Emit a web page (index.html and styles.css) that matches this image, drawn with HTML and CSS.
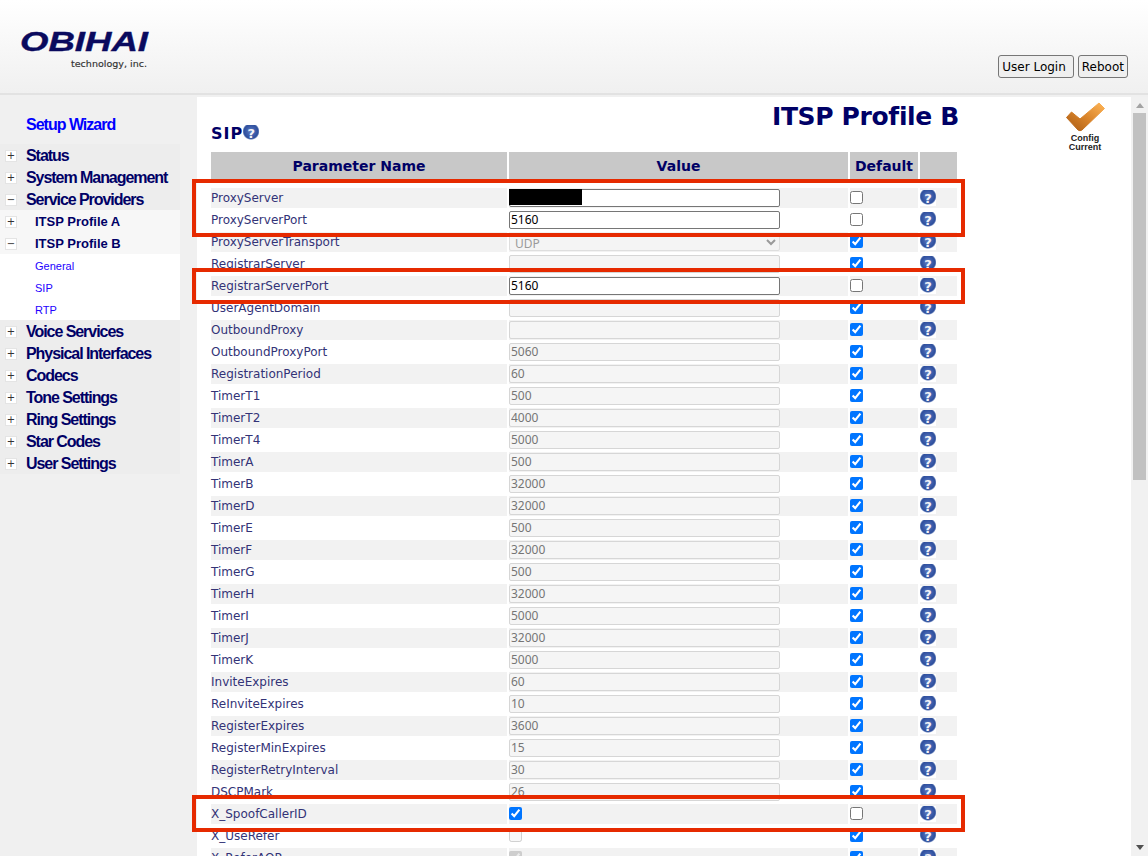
FILE: index.html
```html
<!DOCTYPE html>
<html lang="en">
<head>
<meta charset="utf-8">
<title>ITSP Profile B</title>
<link rel="stylesheet" href="styles.css">
</head>
<body>
<header class="top">
  <div class="logo">
    <svg class="logo-svg" width="140" height="50" viewBox="0 0 140 50">
      <text class="logo-name" x="0" y="25" textLength="128" lengthAdjust="spacingAndGlyphs">OBIHAI</text>
      <text class="logo-sub" x="51" y="41" textLength="76" lengthAdjust="spacingAndGlyphs">technology, inc.</text>
    </svg>
  </div>
  <div class="actions">
    <button class="btn btn-wide">User Login</button>
    <button class="btn">Reboot</button>
  </div>
</header>
<div class="main">
  <aside class="side">
    <a class="wizard">Setup Wizard</a>
    <ul class="nav">
      <li class="n1"><span class="tog">+</span><a>Status</a></li>
      <li class="n1"><span class="tog">+</span><a>System Management</a></li>
      <li class="n1"><span class="tog">−</span><a>Service Providers</a></li>
      <li class="n2"><span class="tog">+</span><a>ITSP Profile A</a></li>
      <li class="n2"><span class="tog">−</span><a>ITSP Profile B</a></li>
      <li class="n3"><a>General</a></li>
      <li class="n3"><a>SIP</a></li>
      <li class="n3"><a>RTP</a></li>
      <li class="n1"><span class="tog">+</span><a>Voice Services</a></li>
      <li class="n1"><span class="tog">+</span><a>Physical Interfaces</a></li>
      <li class="n1"><span class="tog">+</span><a>Codecs</a></li>
      <li class="n1"><span class="tog">+</span><a>Tone Settings</a></li>
      <li class="n1"><span class="tog">+</span><a>Ring Settings</a></li>
      <li class="n1"><span class="tog">+</span><a>Star Codes</a></li>
      <li class="n1"><span class="tog">+</span><a>User Settings</a></li>
    </ul>
  </aside>
  <main class="content">
    <div class="form">
      <h1 class="title">ITSP Profile B</h1>
      <h2 class="section">SIP<span class="help"></span></h2>
      <table class="params">
        <colgroup><col class="c-name"><col class="c-val"><col class="c-def"><col class="c-help"></colgroup>
        <thead>
          <tr><th>Parameter Name</th><th>Value</th><th>Default</th><th></th></tr>
          <tr class="gap"><td colspan="4"></td></tr>
        </thead>
        <tbody>
          <tr><td>ProxyServer</td><td class="val"><input class="field" type="text"><span class="redact"></span></td><td><input class="chk" type="checkbox"></td><td><span class="help"></span></td></tr>
          <tr><td>ProxyServerPort</td><td><input class="field" type="text" value="5160"></td><td><input class="chk" type="checkbox"></td><td><span class="help"></span></td></tr>
          <tr><td>ProxyServerTransport</td><td><select class="field" disabled><option>UDP</option></select></td><td><input class="chk" type="checkbox" checked></td><td><span class="help"></span></td></tr>
          <tr><td>RegistrarServer</td><td><input class="field" type="text" disabled></td><td><input class="chk" type="checkbox" checked></td><td><span class="help"></span></td></tr>
          <tr><td>RegistrarServerPort</td><td><input class="field" type="text" value="5160"></td><td><input class="chk" type="checkbox"></td><td><span class="help"></span></td></tr>
          <tr><td>UserAgentDomain</td><td><input class="field" type="text" disabled></td><td><input class="chk" type="checkbox" checked></td><td><span class="help"></span></td></tr>
          <tr><td>OutboundProxy</td><td><input class="field" type="text" disabled></td><td><input class="chk" type="checkbox" checked></td><td><span class="help"></span></td></tr>
          <tr><td>OutboundProxyPort</td><td><input class="field" type="text" value="5060" disabled></td><td><input class="chk" type="checkbox" checked></td><td><span class="help"></span></td></tr>
          <tr><td>RegistrationPeriod</td><td><input class="field" type="text" value="60" disabled></td><td><input class="chk" type="checkbox" checked></td><td><span class="help"></span></td></tr>
          <tr><td>TimerT1</td><td><input class="field" type="text" value="500" disabled></td><td><input class="chk" type="checkbox" checked></td><td><span class="help"></span></td></tr>
          <tr><td>TimerT2</td><td><input class="field" type="text" value="4000" disabled></td><td><input class="chk" type="checkbox" checked></td><td><span class="help"></span></td></tr>
          <tr><td>TimerT4</td><td><input class="field" type="text" value="5000" disabled></td><td><input class="chk" type="checkbox" checked></td><td><span class="help"></span></td></tr>
          <tr><td>TimerA</td><td><input class="field" type="text" value="500" disabled></td><td><input class="chk" type="checkbox" checked></td><td><span class="help"></span></td></tr>
          <tr><td>TimerB</td><td><input class="field" type="text" value="32000" disabled></td><td><input class="chk" type="checkbox" checked></td><td><span class="help"></span></td></tr>
          <tr><td>TimerD</td><td><input class="field" type="text" value="32000" disabled></td><td><input class="chk" type="checkbox" checked></td><td><span class="help"></span></td></tr>
          <tr><td>TimerE</td><td><input class="field" type="text" value="500" disabled></td><td><input class="chk" type="checkbox" checked></td><td><span class="help"></span></td></tr>
          <tr><td>TimerF</td><td><input class="field" type="text" value="32000" disabled></td><td><input class="chk" type="checkbox" checked></td><td><span class="help"></span></td></tr>
          <tr><td>TimerG</td><td><input class="field" type="text" value="500" disabled></td><td><input class="chk" type="checkbox" checked></td><td><span class="help"></span></td></tr>
          <tr><td>TimerH</td><td><input class="field" type="text" value="32000" disabled></td><td><input class="chk" type="checkbox" checked></td><td><span class="help"></span></td></tr>
          <tr><td>TimerI</td><td><input class="field" type="text" value="5000" disabled></td><td><input class="chk" type="checkbox" checked></td><td><span class="help"></span></td></tr>
          <tr><td>TimerJ</td><td><input class="field" type="text" value="32000" disabled></td><td><input class="chk" type="checkbox" checked></td><td><span class="help"></span></td></tr>
          <tr><td>TimerK</td><td><input class="field" type="text" value="5000" disabled></td><td><input class="chk" type="checkbox" checked></td><td><span class="help"></span></td></tr>
          <tr><td>InviteExpires</td><td><input class="field" type="text" value="60" disabled></td><td><input class="chk" type="checkbox" checked></td><td><span class="help"></span></td></tr>
          <tr><td>ReInviteExpires</td><td><input class="field" type="text" value="10" disabled></td><td><input class="chk" type="checkbox" checked></td><td><span class="help"></span></td></tr>
          <tr><td>RegisterExpires</td><td><input class="field" type="text" value="3600" disabled></td><td><input class="chk" type="checkbox" checked></td><td><span class="help"></span></td></tr>
          <tr><td>RegisterMinExpires</td><td><input class="field" type="text" value="15" disabled></td><td><input class="chk" type="checkbox" checked></td><td><span class="help"></span></td></tr>
          <tr><td>RegisterRetryInterval</td><td><input class="field" type="text" value="30" disabled></td><td><input class="chk" type="checkbox" checked></td><td><span class="help"></span></td></tr>
          <tr><td>DSCPMark</td><td><input class="field" type="text" value="26" disabled></td><td><input class="chk" type="checkbox" checked></td><td><span class="help"></span></td></tr>
          <tr><td>X_SpoofCallerID</td><td><input class="chk" type="checkbox" checked></td><td><input class="chk" type="checkbox"></td><td><span class="help"></span></td></tr>
          <tr><td>X_UseRefer</td><td><input class="chk" type="checkbox" disabled></td><td><input class="chk" type="checkbox" checked></td><td><span class="help"></span></td></tr>
          <tr><td>X_ReferAOR</td><td><input class="chk" type="checkbox" checked disabled></td><td><input class="chk" type="checkbox" checked></td><td><span class="help"></span></td></tr>
        </tbody>
      </table>
    </div>
    <div class="config">
      <svg class="config-check" width="40" height="30" viewBox="0 0 40 30">
        <defs>
          <linearGradient id="chk" x1="0" y1="1" x2="1" y2="0">
            <stop offset="0" stop-color="#a85a14"/>
            <stop offset="0.5" stop-color="#d9842a"/>
            <stop offset="1" stop-color="#ffb658"/>
          </linearGradient>
        </defs>
        <path d="M1.500 15.500 L6.500 10 L15 17 L34 1 L39.500 6.500 L17 28 Q15 29.500 13 28 Z" fill="url(#chk)" stroke="url(#chk)" stroke-width="1" stroke-linejoin="round"/>
      </svg>
      <div class="config-text">Config<br>Current</div>
    </div>
    <div class="scrollbar">
      <span class="arrow-up"></span>
      <span class="thumb"></span>
      <span class="arrow-down"></span>
    </div>
  </main>
</div>
<div class="mark mark-a"></div>
<div class="mark mark-b"></div>
<div class="mark mark-c"></div>
</body>
</html>
```
FILE: styles.css
```css
* { box-sizing: border-box; }
html, body { margin: 0; height: 100%; }
body {
  width: 1148px;
  height: 856px;
  overflow: hidden;
  position: relative;
  display: flex;
  flex-direction: column;
  background: #f0f0f0;
  font-family: "DejaVu Sans", Verdana, sans-serif;
  font-size: 12px;
}
.top {
  flex: 0 0 95px;
  display: flex;
  justify-content: space-between;
  padding: 0 20px 15px 20px;
  background: linear-gradient(#ffffff, #f0f0f0);
  border-bottom: 2px solid #e2e2e2;
}
.logo { padding-top: 26px; }
.logo-svg { display: block; }
.logo-name {
  font-family: "Liberation Sans", Arial, sans-serif;
  font-size: 28px;
  font-weight: bold;
  font-style: italic;
  fill: #0a0a5e;
  stroke: #0a0a5e;
  stroke-width: 0.4px;
}
.logo-sub {
  font-family: "DejaVu Sans", sans-serif;
  font-size: 9px;
  fill: #333333;
  stroke: #333333;
  stroke-width: 0.15px;
}
.actions { display: flex; align-items: flex-end; gap: 4px; }
.btn {
  height: 23px;
  padding: 0 3px;
  background: #efefef;
  border: 1px solid #767676;
  border-radius: 3px;
  font-family: "DejaVu Sans", sans-serif;
  font-size: 12px;
  color: #000;
}
.btn-wide { padding: 0 7px 0 3px; }
.main { flex: 1; display: flex; min-height: 0; }
.side { flex: 0 0 197px; padding-top: 18px; }
.wizard {
  display: block;
  height: 31px;
  padding-left: 26px;
  line-height: 24px;
  font-family: "Liberation Sans", Arial, sans-serif;
  font-size: 16px;
  font-weight: bold;
  letter-spacing: -1px;
  color: #0000ff;
}
.nav { list-style: none; margin: 0; padding: 0; width: 180px; }
.nav li { height: 22px; display: flex; align-items: center; }
.nav .n1 {
  padding-top: 2px;
  background: #ededed;
  font-family: "Liberation Sans", Arial, sans-serif;
  font-size: 16px;
  font-weight: bold;
  letter-spacing: -1.05px;
  color: #000066;
}
.n1 a { margin-left: 9px; }
.n2 {
  background: #f7f7f7;
  font-family: "Liberation Sans", Arial, sans-serif;
  font-size: 13px;
  font-weight: bold;
  color: #000066;
}
.n2 a { margin-left: 18px; }
.n2 .tog { margin-top: 2px; }
.nav .n3 {
  background: #ffffff;
  padding: 2px 0 0 35px;
  font-family: "Liberation Sans", Arial, sans-serif;
  font-size: 11px;
  color: #2200ff;
}
.tog {
  flex: 0 0 12px;
  width: 12px;
  height: 12px;
  margin-left: 5px;
  background: #fff;
  border: 1px solid #e4e4e4;
  font-family: "DejaVu Sans", sans-serif;
  font-size: 10px;
  font-weight: normal;
  letter-spacing: 0;
  line-height: 9px;
  text-align: center;
  color: #333;
}
.content {
  flex: 1;
  margin-top: 2px;
  display: flex;
  background: #fff;
  min-width: 0;
}
.form { flex: 0 0 762px; padding-left: 12px; }
.title {
  margin: 0;
  height: 28px;
  line-height: 39px;
  text-align: right;
  font-size: 25px;
  font-weight: bold;
  letter-spacing: -0.35px;
  color: #000066;
}
.section {
  margin: 0 0 9px 2px;
  height: 16px;
  display: flex;
  align-items: center;
  font-size: 16px;
  font-weight: bold;
  letter-spacing: 1px;
  color: #000066;
}
.params {
  border-spacing: 2px;
  border-collapse: separate;
  table-layout: fixed;
  width: 750px;
  color: #333377;
}
.c-name { width: 296px; }
.c-val { width: 339px; }
.c-def { width: 68px; }
.c-help { width: 37px; }
.params th {
  height: 28px;
  padding: 0;
  background: #c8c8c8;
  font-size: 14px;
  font-weight: bold;
  color: #000066;
  text-align: center;
}
.gap td { height: 4px; padding: 0; background: #fff; }
.params tbody td {
  height: 20px;
  padding: 0;
  line-height: 14px;
  vertical-align: middle;
}
.params tbody tr:nth-child(odd) td { background: #f2f2f2; }
.val { position: relative; }
.field {
  display: block;
  width: 271px;
  height: 18px;
  margin: 0;
  padding: 0 1px 1px;
  border-radius: 2px;
  border: 1px solid #767676;
  background-color: #fff;
  font-family: "Noto Sans", "DejaVu Sans", sans-serif;
  font-size: 12px;
  color: #000;
}
.field:disabled {
  border-color: #d6d6d6;
  background-color: #f5f5f5;
  color: #757575;
}
.redact {
  position: absolute;
  left: 0;
  top: 1px;
  width: 73px;
  height: 16px;
  background: #000;
}
.chk { display: block; width: 13px; height: 13px; margin: 0 0 1px; }
.help {
  display: block;
  position: relative;
  width: 16px;
  height: 16px;
  background: radial-gradient(circle at 50% 40%, #6080c4 0, #3a5aa8 5px, #2f4f9c 7px, #5a76b4 7.6px, #ffffff 8.6px);
  font-family: "DejaVu Sans", sans-serif;
  font-size: 13px;
  font-weight: bold;
  letter-spacing: 0;
  line-height: 17px;
  text-align: center;
  color: #f4f4f8;
}
.help::before { content: "?"; }
.config { flex: 0 0 40px; margin-left: 106px; padding-top: 5px; }
.config-check { display: block; }
.config-text {
  margin-top: 2px;
  font-family: "Liberation Sans", Arial, sans-serif;
  font-size: 9px;
  line-height: 9px;
  font-weight: bold;
  text-align: center;
  color: #222;
}
.scrollbar {
  flex: 0 0 17px;
  margin-left: 26px;
  display: flex;
  flex-direction: column;
  align-items: center;
  background: #f1f1f1;
}
.arrow-up {
  margin: 6px 0 5px;
  border: 4px solid transparent;
  border-top: 0;
  border-bottom: 5px solid #a3a3a3;
}
.thumb { width: 13px; height: 367px; background: #c1c1c1; }
.arrow-down {
  margin-top: auto;
  margin-bottom: 6px;
  border: 4px solid transparent;
  border-bottom: 0;
  border-top: 5px solid #505050;
}
.mark {
  position: absolute;
  left: 192px;
  width: 773px;
  border: 4px solid #e62a00;
}
.mark-a { top: 179px; height: 58px; }
.mark-b { top: 268px; height: 36px; }
.mark-c { top: 795px; height: 37px; }
```
